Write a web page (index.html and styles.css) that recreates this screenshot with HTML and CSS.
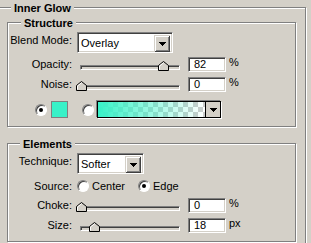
FILE: index.html
```html
<!DOCTYPE html>
<html>
<head>
    <meta charset="UTF-8">
    <title>Inner Glow</title>
    <link rel="stylesheet" href="styles.css">
</head>
<body>
    <div class="group outer">
        <div class="group-title">Inner Glow</div>

        <!-- Structure -->
        <div class="group inner structure">
            <div class="group-title">Structure</div>
            <div class="row row-select">
                <span class="label">Blend Mode:</span>
                <div class="select select-blend">
                    <span class="select-value">Overlay</span>
                    <span class="select-btn"><svg class="arrow" width="7" height="4"><rect x="0" y="0" width="7" height="1"/><rect x="1" y="1" width="5" height="1"/><rect x="2" y="2" width="3" height="1"/><rect x="3" y="3" width="1" height="1"/></svg></span>
                </div>
            </div>
            <div class="row row-slider first-slider">
                <span class="label">Opacity:</span>
                <div class="slider">
                    <div class="track"></div>
                    <svg class="thumb" style="left: 78px" width="11" height="10"><polygon points="0.5,9.5 0.5,4.5 5.5,0.5 10.5,4.5 10.5,9.5" fill="#d4d0c8" stroke="#000"/><polyline points="1.5,8.5 1.5,5 5.5,1.8" fill="none" stroke="#fff"/></svg>
                </div>
                <div class="field">82</div>
                <span class="unit">%</span>
            </div>
            <div class="row row-slider">
                <span class="label">Noise:</span>
                <div class="slider">
                    <div class="track"></div>
                    <svg class="thumb" style="left: -4px" width="11" height="10"><polygon points="0.5,9.5 0.5,4.5 5.5,0.5 10.5,4.5 10.5,9.5" fill="#d4d0c8" stroke="#000"/><polyline points="1.5,8.5 1.5,5 5.5,1.8" fill="none" stroke="#fff"/></svg>
                </div>
                <div class="field">0</div>
                <span class="unit">%</span>
            </div>
            <div class="row row-color">
                <span class="radio checked"></span>
                <span class="swatch"></span>
                <span class="radio radio-gradient"></span>
                <div class="gradient-pick">
                    <span class="gradient"></span>
                    <span class="gradient-btn"><svg class="arrow" width="7" height="4"><rect x="0" y="0" width="7" height="1"/><rect x="1" y="1" width="5" height="1"/><rect x="2" y="2" width="3" height="1"/><rect x="3" y="3" width="1" height="1"/></svg></span>
                </div>
            </div>
        </div>

        <!-- Elements -->
        <div class="group inner elements">
            <div class="group-title">Elements</div>
            <div class="row row-select">
                <span class="label">Technique:</span>
                <div class="select select-technique">
                    <span class="select-value">Softer</span>
                    <span class="select-btn"><svg class="arrow" width="7" height="4"><rect x="0" y="0" width="7" height="1"/><rect x="1" y="1" width="5" height="1"/><rect x="2" y="2" width="3" height="1"/><rect x="3" y="3" width="1" height="1"/></svg></span>
                </div>
            </div>
            <div class="row row-radio">
                <span class="label">Source:</span>
                <span class="radio"></span>
                <span class="radio-text">Center</span>
                <span class="radio checked"></span>
                <span class="radio-text">Edge</span>
            </div>
            <div class="row row-slider first-slider">
                <span class="label">Choke:</span>
                <div class="slider">
                    <div class="track"></div>
                    <svg class="thumb" style="left: -4px" width="11" height="10"><polygon points="0.5,9.5 0.5,4.5 5.5,0.5 10.5,4.5 10.5,9.5" fill="#d4d0c8" stroke="#000"/><polyline points="1.5,8.5 1.5,5 5.5,1.8" fill="none" stroke="#fff"/></svg>
                </div>
                <div class="field">0</div>
                <span class="unit">%</span>
            </div>
            <div class="row row-slider">
                <span class="label">Size:</span>
                <div class="slider">
                    <div class="track"></div>
                    <svg class="thumb" style="left: 9px" width="11" height="10"><polygon points="0.5,9.5 0.5,4.5 5.5,0.5 10.5,4.5 10.5,9.5" fill="#d4d0c8" stroke="#000"/><polyline points="1.5,8.5 1.5,5 5.5,1.8" fill="none" stroke="#fff"/></svg>
                </div>
                <div class="field">18</div>
                <span class="unit">px</span>
            </div>
        </div>
    </div>
</body>
</html>
```

FILE: styles.css
```css
/* Layer style dialog, classic grey */
body {
    margin: 0;
    padding: 0;
    background-color: #d4d0c8;
    font-family: "Liberation Sans", Arial, sans-serif;
    font-size: 11px;
    color: #000;
    overflow: hidden;
}
/* Etched group boxes */
.group {
    box-sizing: border-box;
    border: 1px solid #808080;
    box-shadow: inset 1px 1px 0 #fff, 1px 1px 0 #fff;
}
.group-title {
    width: fit-content;
    margin: -6px 0 0 12px;
    padding: 0 3px;
    background-color: #d4d0c8;
    font-weight: bold;
    line-height: 13px;
}
.outer {
    width: 308px;
    margin: 7px 0 0 -2px;
    padding-bottom: 1px;
}
.inner {
    width: 289px;
    margin-left: 8px;
}
.inner .group-title {
    margin-left: 13px;
}
.structure {
    margin-top: 7px;
    padding-bottom: 8px;
}
.elements {
    margin-top: 16px;
    padding-bottom: 8px;
}
.elements .group-title {
    margin-left: 12px;
}
/* Rows */
.row {
    display: flex;
    align-items: flex-start;
}
.label {
    width: 64px;
    padding-right: 1px;
    text-align: right;
    line-height: 13px;
    flex-shrink: 0;
}
.row-select {
    margin-top: 2px;
    height: 21px;
}
.row-select .label {
    padding-top: 2px;
}
.row-slider {
    margin-top: 5px;
    height: 15px;
}
.structure .first-slider {
    margin-top: 4px;
}
.elements .first-slider {
    margin-top: 6px;
}
.row-slider .label {
    padding-top: 1px;
}
/* Combo box */
.select {
    display: flex;
    box-sizing: border-box;
    height: 21px;
    margin-left: 4px;
    padding: 2px;
    background-color: #fff;
    border: 1px solid;
    border-color: #808080 #fff #fff #808080;
    box-shadow: inset 1px 1px 0 #404040, inset -1px -1px 0 #d4d0c8;
}
.select-blend {
    width: 96px;
}
.select-technique {
    width: 67px;
}
.select-value {
    flex: 1;
    padding-left: 1px;
    line-height: 17px;
}
.select-btn,
.gradient-btn {
    display: flex;
    align-items: center;
    justify-content: center;
    width: 16px;
    background-color: #d4d0c8;
}
.select-btn {
    height: 17px;
    box-shadow: inset 1px 1px 0 #d4d0c8, inset -1px -1px 0 #404040, inset 2px 2px 0 #fff, inset -2px -2px 0 #808080;
}
.arrow {
    display: block;
    fill: #000;
}
/* Slider */
.slider {
    position: relative;
    width: 100px;
    height: 15px;
    margin-left: 7px;
}
.track {
    box-sizing: border-box;
    height: 5px;
    margin-top: 8px;
    border: 1px solid;
    border-color: #808080 #fff #fff #808080;
    box-shadow: inset 1px 1px 0 #404040;
    background-color: #d4d0c8;
}
.thumb {
    position: absolute;
    top: 4px;
    display: block;
}
.field {
    box-sizing: border-box;
    width: 38px;
    height: 15px;
    margin-left: 8px;
    padding-left: 5px;
    background-color: #fff;
    border: 1px solid;
    border-color: #808080 #fff #fff #808080;
    box-shadow: inset 1px 1px 0 #404040, inset -1px -1px 0 #d4d0c8;
    line-height: 13px;
}
.unit {
    margin-left: 3px;
    line-height: 11px;
}
/* Radios */
.radio {
    position: relative;
    box-sizing: border-box;
    width: 12px;
    height: 12px;
    flex-shrink: 0;
    border-radius: 50%;
    background-color: #fff;
    border: 1px solid;
    border-color: #808080 #fff #fff #808080;
    box-shadow: inset 1px 1px 0 #404040;
}
.radio.checked::after {
    content: "";
    position: absolute;
    left: 3px;
    top: 3px;
    width: 4px;
    height: 4px;
    border-radius: 50%;
    background-color: #000;
}
.row-radio {
    margin-top: 6px;
    height: 12px;
    align-items: center;
}
.row-radio .radio {
    margin-left: 4px;
}
.radio-text {
    margin-left: 3px;
    width: 42px;
    line-height: 12px;
}
/* Glow colour */
.row-color {
    margin-top: 9px;
    height: 17px;
    align-items: center;
}
.row-color .radio {
    margin-left: 27px;
}
.swatch {
    box-sizing: border-box;
    width: 17px;
    height: 17px;
    margin-left: 4px;
    border: 1px solid #808080;
    background-color: #38f2c8;
}
.row-color .radio-gradient {
    margin-left: 14px;
}
.gradient-pick {
    display: flex;
    box-sizing: border-box;
    width: 124px;
    height: 17px;
    margin-left: 3px;
    border: 1px solid #000;
    box-shadow: -1px -1px 0 #808080, 1px 1px 0 #fff;
}
.gradient {
    flex: 1;
    border-right: 1px solid #000;
    background-image:
        linear-gradient(to right, #38f2c8, rgba(56, 242, 200, 0)),
        linear-gradient(45deg, #ccc 25%, transparent 25%, transparent 75%, #ccc 75%),
        linear-gradient(45deg, #ccc 25%, #fff 25%, #fff 75%, #ccc 75%);
    background-size: 100% 100%, 10px 10px, 10px 10px;
    background-position: 0 0, 0 0, 5px 5px;
}
.gradient-btn {
    width: 14px;
}
```
